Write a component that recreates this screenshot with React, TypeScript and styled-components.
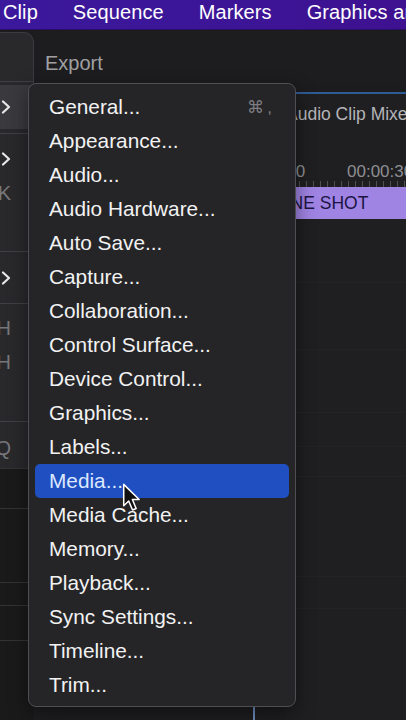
import styled, { createGlobalStyle } from "styled-components";

const GlobalStyle = createGlobalStyle`
  html, body {
    margin: 0;
    padding: 0;
    background: #1c1c1e;
  }
  body {
    font-family: "Liberation Sans", Arial, sans-serif;
    -webkit-font-smoothing: antialiased;
  }
`;

const menuBarItems = ["Clip", "Sequence", "Markers", "Graphics and Titles"];

const prefItems = [
  { label: "General...", shortcut: "⌘," },
  { label: "Appearance..." },
  { label: "Audio..." },
  { label: "Audio Hardware..." },
  { label: "Auto Save..." },
  { label: "Capture..." },
  { label: "Collaboration..." },
  { label: "Control Surface..." },
  { label: "Device Control..." },
  { label: "Graphics..." },
  { label: "Labels..." },
  { label: "Media...", active: true },
  { label: "Media Cache..." },
  { label: "Memory..." },
  { label: "Playback..." },
  { label: "Sync Settings..." },
  { label: "Timeline..." },
  { label: "Trim..." },
];

const Chevron = () => (
  <svg width="10" height="14" viewBox="0 0 10 14">
    <path
      d="M2 1.5 L8 7 L2 12.5"
      fill="none"
      stroke="#e8e8e8"
      strokeWidth="2.2"
      strokeLinecap="round"
      strokeLinejoin="round"
    />
  </svg>
);

const Cursor = () => (
  <svg width="20" height="29" viewBox="0 0 14 21">
    <path
      d="M1 1 L1 16.5 L4.6 13 L7.4 19.6 L10 18.5 L7.3 12 L12.2 12 Z"
      fill="#111"
      stroke="#fff"
      strokeWidth="1.1"
      strokeLinejoin="round"
    />
  </svg>
);

export default function App() {
  return (
    <>
      <GlobalStyle />
      <Screen>
        <MenuBar>
          {menuBarItems.map((m) => (
            <MenuBarItem key={m}>{m}</MenuBarItem>
          ))}
        </MenuBar>

        <Workspace>
          <LeftColumn>
            <ParentPanel>
              <ParentRow $height={48} />
              <Separator />
              <ParentRow $height={44} $top={3} $hover>
                <Chevron />
              </ParentRow>
              <Separator $top={4} />
              <ParentRow $top={8}>
                <Chevron />
              </ParentRow>
              <ParentRow>
                <KeyHint>K</KeyHint>
              </ParentRow>
              <ParentRow $height={41} />
              <Separator />
              <ParentRow $top={9}>
                <Chevron />
              </ParentRow>
              <Separator $top={8} />
              <ParentRow $top={7}>
                <KeyHint>H</KeyHint>
              </ParentRow>
              <ParentRow>
                <KeyHint>H</KeyHint>
              </ParentRow>
              <Separator $top={42} />
              <ParentRow $top={9}>
                <KeyHint>Q</KeyHint>
              </ParentRow>
            </ParentPanel>
            <LowerList>
              <ListLine $top={39} />
              <ListLine $top={73} />
              <ListLabel>l</ListLabel>
              <ListLine $top={0} />
              <ListLine $top={34} />
            </LowerList>
          </LeftColumn>

          <MainColumn>
            <Header>
              <HeaderTitle>Export</HeaderTitle>
            </Header>
            <Body>
              <SourcePane>
                <FaintLine $top={200} />
                <FaintLine $top={64} />
                <FaintLine $top={31} />
                <Playhead />
              </SourcePane>
              <TimelinePane>
                <PaneTab>Audio Clip Mixer</PaneTab>
                <Ruler>
                  <TimeLabel $width={108}>00:00:00</TimeLabel>
                  <TimeLabel>00:00:30</TimeLabel>
                </Ruler>
                <Ticks />
                <ClipBar>
                  <ClipName>ONE SHOT</ClipName>
                </ClipBar>
                <FaintLine $top={63} />
                <FaintLine $top={66} />
                <FaintLine $top={62} />
                <FaintLine $top={33} />
                <FaintLine $top={29} />
                <FaintLine $top={99} />
                <FaintLine $top={31} />
              </TimelinePane>
            </Body>
          </MainColumn>
        </Workspace>

        <Submenu>
          {prefItems.map((item) => (
            <MenuItem key={item.label} $active={item.active}>
              <span>{item.label}</span>
              {item.shortcut && <Shortcut>{item.shortcut}</Shortcut>}
            </MenuItem>
          ))}
        </Submenu>

        <CursorWrap>
          <Cursor />
        </CursorWrap>
      </Screen>
    </>
  );
}

const Screen = styled.div`
  position: relative;
  width: 406px;
  height: 720px;
  overflow: hidden;
  background: #1c1c1e;
  display: flex;
  flex-direction: column;
`;

const MenuBar = styled.div`
  height: 30px;
  flex-shrink: 0;
  display: flex;
  align-items: center;
  gap: 35px;
  padding: 0 0 4px 3px;
  box-sizing: border-box;
  background: linear-gradient(90deg, #3b189c 0%, #3c1596 60%, #3e1190 100%);
  border-bottom: 1px solid #2a0b66;
  white-space: nowrap;
`;

const MenuBarItem = styled.span`
  color: #ffffff;
  font-size: 20px;
  letter-spacing: 0.1px;
`;

const Workspace = styled.div`
  flex: 1;
  display: flex;
  min-height: 0;
`;

const LeftColumn = styled.div`
  width: 34px;
  flex-shrink: 0;
  display: flex;
  flex-direction: column;
`;

const ParentPanel = styled.div`
  margin-top: 2px;
  height: 436px;
  box-sizing: border-box;
  background: #29292c;
  border-right: 1px solid #3c3c40;
  border-top: 1px solid #3c3c40;
  border-top-right-radius: 10px;
  display: flex;
  flex-direction: column;
`;

const ParentRow = styled.div<{ $height?: number; $top?: number; $hover?: boolean }>`
  height: ${(p) => p.$height ?? 34}px;
  margin-top: ${(p) => p.$top ?? 0}px;
  flex-shrink: 0;
  display: flex;
  align-items: center;
  justify-content: flex-end;
  padding-right: 22px;
  background: ${(p) => (p.$hover ? "#3a3a3e" : "transparent")};
`;

const Separator = styled.div<{ $top?: number }>`
  height: 1px;
  flex-shrink: 0;
  margin: ${(p) => p.$top ?? 0}px 0 0;
  background: #414145;
`;

const KeyHint = styled.span`
  color: #77777b;
  font-size: 20px;
  line-height: 1;
`;

const LowerList = styled.div`
  flex: 1;
  background: #1a1a1b;
  border-top: 1px solid #333336;
  display: flex;
  flex-direction: column;
`;

const ListLine = styled.div<{ $top: number }>`
  height: 1px;
  margin-top: ${(p) => p.$top}px;
  background: #333336;
`;

const ListLabel = styled.div`
  height: 22px;
  color: #c8c8c8;
  font-size: 19px;
  line-height: 22px;
  margin-left: -4px;
`;

const MainColumn = styled.div`
  flex: 1;
  display: flex;
  flex-direction: column;
  min-width: 0;
`;

const Header = styled.div`
  height: 52px;
  flex-shrink: 0;
  box-sizing: border-box;
  display: flex;
  align-items: flex-end;
  padding: 0 0 7px 11px;
  background: #1d1d1f;
`;

const HeaderTitle = styled.span`
  color: #a0a0a3;
  font-size: 20px;
  line-height: 24px;
`;

const Body = styled.div`
  flex: 1;
  display: flex;
  min-height: 0;
`;

const SourcePane = styled.div`
  width: 252px;
  flex-shrink: 0;
  display: flex;
  flex-direction: column;
  background: #1e1e20;
`;

const Playhead = styled.div`
  margin-top: auto;
  margin-left: 219px;
  width: 2px;
  height: 13px;
  background: #6f8fc0;
`;

const TimelinePane = styled.div`
  flex: 1;
  margin-top: 10px;
  display: flex;
  flex-direction: column;
  background: #1f1f21;
  border-top: 2px solid #2f5a95;
  overflow: hidden;
`;

const PaneTab = styled.div`
  height: 40px;
  flex-shrink: 0;
  display: flex;
  align-items: center;
  color: #b4b4b8;
  font-size: 17.5px;
  white-space: nowrap;
`;

const Ruler = styled.div`
  height: 47px;
  flex-shrink: 0;
  display: flex;
  align-items: flex-end;
  margin-left: -47px;
  white-space: nowrap;
`;

const TimeLabel = styled.span<{ $width?: number }>`
  color: #8e8e92;
  font-size: 17px;
  line-height: 18px;
  width: ${(p) => (p.$width ? `${p.$width}px` : "auto")};
  flex-shrink: 0;
`;

const Ticks = styled.div`
  height: 6px;
  flex-shrink: 0;
  background: repeating-linear-gradient(
    90deg,
    transparent 0 6px,
    #505054 6px 7px
  );
`;

const ClipBar = styled.div`
  height: 32px;
  flex-shrink: 0;
  display: flex;
  align-items: center;
  background: #a084e4;
  overflow: hidden;
`;

const ClipName = styled.span`
  color: #1b1442;
  font-size: 17.5px;
  margin-left: -9px;
  white-space: nowrap;
`;

const FaintLine = styled.div<{ $top: number }>`
  height: 1px;
  flex-shrink: 0;
  margin-top: ${(p) => p.$top}px;
  background: #232326;
`;

const Submenu = styled.div`
  position: absolute;
  left: 28px;
  top: 83px;
  width: 268px;
  height: 624px;
  box-sizing: border-box;
  padding: 6px 6px 0;
  background: #252528;
  border: 1px solid #4e4e53;
  border-radius: 8px;
  box-shadow: 0 6px 20px rgba(0, 0, 0, 0.45);
  display: flex;
  flex-direction: column;
`;

const MenuItem = styled.div<{ $active?: boolean }>`
  height: 34px;
  flex-shrink: 0;
  display: flex;
  align-items: center;
  justify-content: space-between;
  padding: 0 14px;
  border-radius: 5px;
  font-size: 20.8px;
  color: ${(p) => (p.$active ? "#dce8ff" : "#f2f2f2")};
  background: ${(p) => (p.$active ? "#1f4fc0" : "transparent")};
  white-space: nowrap;
`;

const Shortcut = styled.span`
  color: #7d7d82;
  font-size: 17px;
  letter-spacing: 3px;
`;

const CursorWrap = styled.div`
  position: absolute;
  left: 122px;
  top: 483px;
  line-height: 0;
  pointer-events: none;
`;
